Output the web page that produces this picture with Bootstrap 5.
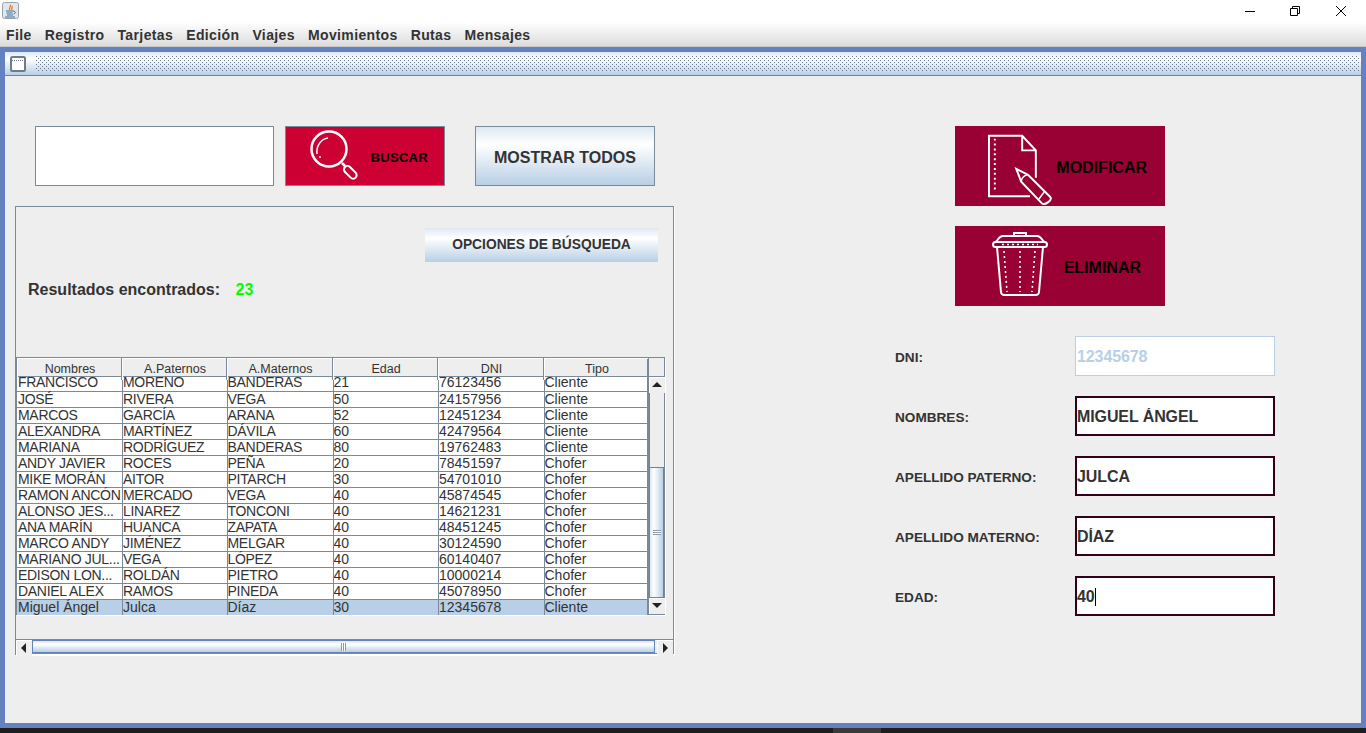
<!DOCTYPE html>
<html lang="es">
<head>
  <meta charset="UTF-8" />
  <title>Clientes y Choferes</title>
  <meta name="viewport" content="width=device-width, initial-scale=1">
  <link href="https://cdn.jsdelivr.net/npm/bootstrap@5.3.3/dist/css/bootstrap.min.css" rel="stylesheet">
  <style>
    html, body { height: 733px; overflow: hidden; }
    body { font-family: "Liberation Sans", Arial, sans-serif; color: #333; background: #1e1e1e; }
    .win-title { height: 22px; background: #fff; padding-left: 2px; }
    .win-ctrls { gap: 33px; padding-right: 19px; }
    .menu-strip { height: 25px; background: linear-gradient(#fff, #dcdcdc); border-bottom: 1px solid #c8c8c8; padding: 3px 0 0 6px; gap: 13px; font-size: 14px; font-weight: 700; color: #333; letter-spacing: .38px; }
    .inner-frame { height: 681px; background: #eee; border: 5px solid #6382bf; }
    .inner-title { height: 24px; border-bottom: 1px solid #6382bf; padding: 0 2px 0 5px; gap: 10px; background: linear-gradient(#dde8f3, #fff 30%, #b8cfe5); }
    .dots { height: 16px; background-image: radial-gradient(circle at .5px .5px, #66788e .6px, transparent 1px), radial-gradient(circle at .5px .5px, #66788e .6px, transparent 1px); background-size: 4px 4px; background-position: 0 0, 2px 2px; }
    .left-side { width: 669px; padding: 50px 0 0 10px; }
    .right-side { padding: 50px 0 0 221px; }
    .search-row { padding-left: 20px; }
    .search-input { width: 239px; height: 60px; border: 1px solid #7a8a99; border-radius: 0; }
    .btn-buscar { width: 160px; height: 60px; margin-left: 11px; background: #c03; border: 1px solid #7a8a99; border-radius: 0; color: #000; font-size: 13px; font-weight: 700; padding: 0 16px 0 23px; letter-spacing: .3px; }
    .btn-buscar span { padding-top: 3px; }
    .btn-metal { background: linear-gradient(#dde8f3, #fff 30%, #b8cfe5); border-radius: 0; color: #333; font-weight: 700; padding: 0; }
    .btn-mostrar { width: 180px; height: 60px; margin-left: 30px; border: 1px solid #7a8a99; font-size: 16px; padding-top: 3px; }
    .results-panel { width: 659px; height: 449px; margin-top: 20px; border: 1px solid #7a8a99; box-shadow: 1px 1px 0 #fff; padding: 21px 0 0 0; }
    .btn-opciones { width: 233px; height: 34px; margin: 0 15px 0 auto; display: block; border: 0; font-size: 13.8px; }
    .found-row { padding: 16px 0 0 12px; height: 95px; font-size: 16px; font-weight: 700; }
    .found-num { color: #0f0; margin-left: 11px; }
    .grid-box { width: 649px; height: 258px; box-shadow: 1px 1px 0 #fff; }
    .grid-left { width: 633px; border: 1px solid #7a8a99; border-right-width: 2px; }
    .grid-head { height: 19px; font-size: 12.5px; border-bottom: 1px solid #7a8a99; }
    .grid-head div { text-align: center; line-height: 22px; padding-left: 2px; border-right: 1px solid #7a8a99; box-shadow: inset 1px 1px 0 #fff; }
    .grid-scroll { height: 238px; overflow: hidden; }
    .grid-scroll .table { margin: -2px 0 0; table-layout: fixed; width: 632px; font-size: 14px; color: #333; --bs-table-bg: #fff; }
    .grid-scroll td { height: 16px; padding: 0; line-height: 15px; border: 0; border-right: 1px solid #7a8a99; border-bottom: 1px solid #7a8a99; white-space: nowrap; overflow-x: clip; overflow-y: visible; }
    .grid-scroll td:first-child { padding-left: 1px; }
    .grid-scroll td:nth-child(2), .grid-scroll td:nth-child(5) { padding-left: .5px; }
    .grid-scroll tr:not(.picked) td:nth-child(-n+3) { letter-spacing: -.3px; }
    .grid-scroll tr.picked td { --bs-table-bg: #b8cfe5; background: #b8cfe5; color: #333; }
    .cw1, .cw2 { width: 105px; } .cw3 { width: 106px; } .cw4 { width: 105px; } .cw5 { width: 106px; } .cw6 { width: 105px; }
    .head-cols { display: grid; grid-template-columns: 105px 105px 106px 105px 106px 105px; }
    .v-bar { width: 16px; border-top: 1px solid #7a8a99; border-right: 1px solid #7a8a99; border-bottom: 1px solid #7a8a99; }
    .v-head { height: 19px; background: #eee; border-bottom: 1px solid #7a8a99; }
    .arrow-btn { width: 16px; height: 16px; background: #eee; box-shadow: inset 1px 1px 0 #fff; }
    .v-track { height: 74px; background: #eee; border-left: 1px solid #6382bf; }
    .v-thumb { height: 131px; border: 1px solid #6382bf; background: linear-gradient(90deg, #dde8f3, #fff 30%, #b8cfe5); }
    .grip-v { width: 8px; height: 5px; background: repeating-linear-gradient(#8a9aac 0 1px, #fff 1px 2px); }
    .grip-h { width: 5px; height: 8px; background: repeating-linear-gradient(90deg, #8a9aac 0 1px, #fff 1px 2px); }
    .h-bar { height: 15px; width: 658px; margin: 24px 0 0 0; border: 1px solid #7a8a99; border-left: 0; box-shadow: 0 1px 0 #fff; }
    .h-thumb { margin-right: 2px; border: 1px solid #6382bf; background: linear-gradient(#dde8f3, #fff 30%, #b8cfe5); }
    .act-box { width: 210px; height: 80px; margin-left: 60px; background: #903; border: 0; border-radius: 0; color: #000; font-size: 16px; font-weight: 700; padding: 0; }
    .act-box span { padding-top: 4px; }
    .act-mod { padding: 0 18px 0 33px; }
    .act-del { margin-top: 20px; padding: 0 24px 0 37px; }
    .act-del svg { margin-bottom: 4px; }
    .data-form { margin-top: 30px; width: 380px; gap: 20px; }
    .data-label { width: 180px; padding-top: 4px; font-size: 13.6px; font-weight: 700; color: #333; margin: 0; }
    .data-input { width: 200px; height: 40px; border: 2px solid #33001a; border-radius: 0; padding: 2px 0 0; font-size: 16px; font-weight: 700; letter-spacing: -.1px; color: #333; background: #fff; }
    .data-input[readonly] { border: 1px solid #b8cfe5; color: #b8cfe5; background: #fff; padding-left: 1px; }
    .text-caret { position: absolute; left: 20px; top: 12px; width: 1px; height: 18px; background: #000; }
    .task-strip { height: 5px; }
    .task-spot { width: 48px; height: 5px; margin-left: 833px; background: #3a3a3a; }
  </style>
</head>
<body>
  <div class="win-title d-flex align-items-center justify-content-between">
    <svg width="18" height="18" viewBox="0 0 18 18">
      <rect x=".5" y=".5" width="16" height="16" rx="2" fill="#e2e6ea" stroke="#9aa4ae"/>
      <path d="M8 3c2 1-2 3 0 5M10 4c1 1-1 2 0 4" fill="none" stroke="#e2711d" stroke-width="1.2"/>
      <path d="M4 9h8M4.500 11h6M5 13h6M3 15h10" stroke="#3f6f9f" stroke-width="1"/>
      <path d="M12 9.500c2 0 2 2-.5 2.500" fill="none" stroke="#3f6f9f"/>
    </svg>
    <div class="win-ctrls d-flex align-items-center">
      <svg width="12" height="12" viewBox="0 0 12 12"><path d="M0 6.500h10" stroke="#000"/></svg>
      <svg width="12" height="12" viewBox="0 0 12 12"><path d="M.5 3.500h7v7h-7zM2.500 3.500v-2h7v7h-2" fill="none" stroke="#000"/></svg>
      <svg width="12" height="12" viewBox="0 0 12 12"><path d="M1 1l10 10M11 1L1 11" stroke="#000"/></svg>
    </div>
  </div>
  <div class="menu-strip d-flex align-items-center">
    <span>File</span><span>Registro</span><span>Tarjetas</span><span>Edición</span><span>Viajes</span><span>Movimientos</span><span>Rutas</span><span>Mensajes</span>
  </div>

  <div class="inner-frame">
    <div class="inner-title d-flex align-items-center">
      <svg width="16" height="16" viewBox="0 0 16 16" class="flex-shrink-0"><rect x="1" y="1" width="14" height="14" rx="1.500" fill="#fff" stroke="#6e7b88" stroke-width="2"/><path d="M2 4.500h12" stroke="#6e7b88" stroke-dasharray="1 1"/></svg>
      <div class="dots flex-grow-1"></div>
    </div>
    <div class="d-flex">
      <div class="left-side">
        <div class="search-row d-flex">
          <input type="text" class="form-control search-input">
          <button type="button" class="btn btn-buscar d-flex align-items-center justify-content-between">
            <svg width="52" height="52" viewBox="0 0 52 52" fill="none" stroke="#fff" stroke-width="2.500">
              <circle cx="20" cy="19" r="17.500"/>
              <path d="M8 24c-1-8 4-15 11-16" stroke-width="1.500"/>
              <circle cx="11" cy="27" r="1" fill="#fff" stroke="none"/>
              <path d="M33 33l3 3"/>
              <rect x="-3.500" y="0" width="7" height="15" rx="3.500" transform="translate(36 37) rotate(-45)" stroke-width="2"/>
            </svg>
            <span>BUSCAR</span>
          </button>
          <button type="button" class="btn btn-metal btn-mostrar">MOSTRAR TODOS</button>
        </div>

        <div class="results-panel">
          <button type="button" class="btn btn-metal btn-opciones">OPCIONES DE BÚSQUEDA</button>
          <div class="found-row">Resultados encontrados: <span class="found-num">23</span></div>
          <div class="grid-box d-flex">
            <div class="grid-left flex-shrink-0">
              <div class="grid-head head-cols">
                <div>Nombres</div><div>A.Paternos</div><div>A.Maternos</div><div>Edad</div><div>DNI</div><div>Tipo</div>
              </div>
              <div class="grid-scroll">
                <table class="table">
                  <colgroup><col class="cw1"><col class="cw2"><col class="cw3"><col class="cw4"><col class="cw5"><col class="cw6"></colgroup>
                  <tbody id="rows"></tbody>
                </table>
              </div>
            </div>
            <div class="v-bar flex-shrink-0">
              <div class="v-head"></div>
              <div class="arrow-btn d-flex align-items-center justify-content-center">
                <svg width="10" height="6" viewBox="0 0 10 6"><path d="M5 0l5 5H0z" fill="#222"/></svg>
              </div>
              <div class="v-track"></div>
              <div class="v-thumb d-flex align-items-center justify-content-center"><div class="grip-v"></div></div>
              <div class="arrow-btn d-flex align-items-center justify-content-center">
                <svg width="10" height="6" viewBox="0 0 10 6"><path d="M0 0h10L5 5z" fill="#222"/></svg>
              </div>
            </div>
          </div>
          <div class="h-bar d-flex">
            <div class="arrow-btn d-flex align-items-center justify-content-center flex-shrink-0" >
              <svg width="6" height="10" viewBox="0 0 6 10"><path d="M5 0v10L0 5z" fill="#222"/></svg>
            </div>
            <div class="h-thumb flex-grow-1 d-flex align-items-center justify-content-center"><div class="grip-h"></div></div>
            <div class="arrow-btn d-flex align-items-center justify-content-center flex-shrink-0">
              <svg width="6" height="10" viewBox="0 0 6 10"><path d="M1 0v10l5-5z" fill="#222"/></svg>
            </div>
          </div>
        </div>
      </div>

      <div class="right-side">
        <button type="button" class="btn act-box act-mod d-flex align-items-center justify-content-between">
          <svg width="70" height="80" viewBox="0 0 70 80" fill="none" stroke="#fff" stroke-width="2">
            <path d="M43 71H1V9h34l14 15v28M35 9v15h14"/>
            <path d="M7 12v55" stroke-dasharray="2 3"/>
            <path d="M29 43l12 6 23 23c2 3-6 9-9 6L34 56z" fill="#903"/>
            <path d="M34 56c0-4 4-7 7-7M52 74l6-8" stroke-width="1.600"/>
          </svg>
          <span>MODIFICAR</span>
        </button>
        <button type="button" class="btn act-box act-del d-flex align-items-center justify-content-between">
          <svg width="56" height="64" viewBox="0 0 56 64" fill="none" stroke="#fff" stroke-width="2">
            <path d="M3 10c3 0 3-6 8-6h34c5 0 5 6 8 6M22 4V1h12v3"/>
            <rect x="1" y="10" width="54" height="5" rx="2.500"/>
            <path d="M5 15l4 45c0 2 2 3 3 3h32c1 0 3-1 3-3l4-45"/>
            <path d="M12 19l3 41M28 19v41M43 19l-3 41M10 12.500h36" stroke-dasharray="2 3" stroke-width="1.600"/>
          </svg>
          <span>ELIMINAR</span>
        </button>

        <form class="data-form d-flex flex-column">
          <div class="d-flex align-items-center"><label class="data-label" for="dni">DNI:</label><input id="dni" class="form-control data-input" value="12345678" readonly></div>
          <div class="d-flex align-items-center"><label class="data-label" for="nom">NOMBRES:</label><input id="nom" class="form-control data-input" value="MIGUEL ÁNGEL"></div>
          <div class="d-flex align-items-center"><label class="data-label" for="pat">APELLIDO PATERNO:</label><input id="pat" class="form-control data-input" value="JULCA"></div>
          <div class="d-flex align-items-center"><label class="data-label" for="mat">APELLIDO MATERNO:</label><input id="mat" class="form-control data-input" value="DÍAZ"></div>
          <div class="d-flex align-items-center"><label class="data-label" for="eda">EDAD:</label><div class="position-relative"><input id="eda" class="form-control data-input" value="40"><span class="text-caret"></span></div></div>
        </form>
      </div>
    </div>
  </div>
  <div class="task-strip"><div class="task-spot"></div></div>

  <script>
    const filas = [
      ['FRANCISCO','MORENO','BANDERAS','21','76123456','Cliente'],
      ['JOSÉ','RIVERA','VEGA','50','24157956','Cliente'],
      ['MARCOS','GARCÍA','ARANA','52','12451234','Cliente'],
      ['ALEXANDRA','MARTÍNEZ','DÁVILA','60','42479564','Cliente'],
      ['MARIANA','RODRÍGUEZ','BANDERAS','80','19762483','Cliente'],
      ['ANDY JAVIER','ROCES','PEÑA','20','78451597','Chofer'],
      ['MIKE MORÁN','AITOR','PITARCH','30','54701010','Chofer'],
      ['RAMON ANCÓN','MERCADO','VEGA','40','45874545','Chofer'],
      ['ALONSO JES...','LINAREZ','TONCONI','40','14621231','Chofer'],
      ['ANA MARÍN','HUANCA','ZAPATA','40','48451245','Chofer'],
      ['MARCO ANDY','JIMÉNEZ','MELGAR','40','30124590','Chofer'],
      ['MARIANO JUL...','VEGA','LÓPEZ','40','60140407','Chofer'],
      ['EDISON LON...','ROLDÁN','PIETRO','40','10000214','Chofer'],
      ['DANIEL ALEX','RAMOS','PINEDA','40','45078950','Chofer'],
      ['Miguel Ángel','Julca','Díaz','30','12345678','Cliente']
    ];
    document.getElementById('rows').innerHTML = filas.map((f, i) =>
      '<tr' + (i === filas.length - 1 ? ' class="picked"' : '') + '>' + f.map(c => '<td>' + c + '</td>').join('') + '</tr>'
    ).join('');
  </script>
</body>
</html>
